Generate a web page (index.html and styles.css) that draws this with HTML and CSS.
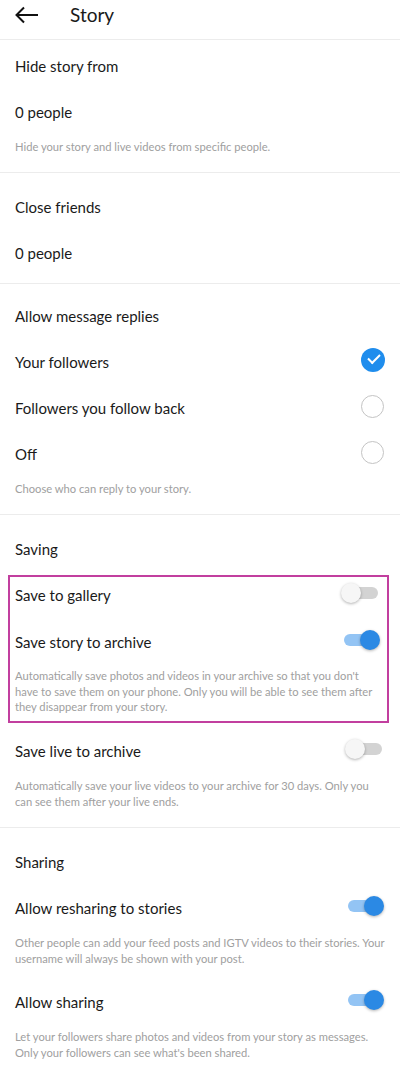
FILE: index.html
```html
<!DOCTYPE html>
<html lang="en">

<head>
    <meta charset="UTF-8">
    <meta name="viewport" content="width=device-width, initial-scale=1.0">
    <title>Story</title>
    <link rel="stylesheet" href="styles.css">
</head>

<body>
    <header class="topbar">
        <svg class="back" width="24" height="18" viewBox="0 0 24 18">
            <path d="M23 9H2M9 1.5L1.5 9L9 16.5" fill="none" stroke="#111" stroke-width="2" />
        </svg>
        <h1 class="title">Story</h1>
    </header>

    <section class="section first">
        <div class="row">Hide story from</div>
        <div class="row">0 people</div>
        <p class="desc">Hide your story and live videos from specific people.</p>
    </section>

    <section class="section padded">
        <div class="row">Close friends</div>
        <div class="row">0 people</div>
    </section>

    <section class="section replies">
        <div class="row">Allow message replies</div>
        <div class="row">Your followers <span class="radio checked"></span></div>
        <div class="row">Followers you follow back <span class="radio"></span></div>
        <div class="row">Off <span class="radio"></span></div>
        <p class="desc">Choose who can reply to your story.</p>
    </section>

    <section class="section padded-top">
        <div class="row">Saving</div>
        <div class="highlight">
            <div class="row short">Save to gallery <span class="toggle"></span></div>
            <div class="row">Save story to archive <span class="toggle on"></span></div>
            <p class="desc">Automatically save photos and videos in your archive so that you don't have to save them on your phone. Only you will be able to see them after they disappear from your story.</p>
        </div>
        <div class="row live">Save live to archive <span class="toggle"></span></div>
        <p class="desc">Automatically save your live videos to your archive for 30 days. Only you can see them after your live ends.</p>
    </section>

    <section class="section padded-top last">
        <div class="row">Sharing</div>
        <div class="row">Allow resharing to stories <span class="toggle on"></span></div>
        <p class="desc tight">Other people can add your feed posts and IGTV videos to their stories. Your username will always be shown with your post.</p>
        <div class="row">Allow sharing <span class="toggle on"></span></div>
        <p class="desc">Let your followers share photos and videos from your story as messages. Only your followers can see what's been shared.</p>
    </section>
</body>

</html>
```

FILE: styles.css
```css
body {
    margin: 0;
    padding: 0;
    width: 400px;
    height: 1084px;
    overflow: hidden;
    background: #fff;
    color: #1a1a1a;
    font-family: "Lato", "Noto Sans", sans-serif;
}

.topbar {
    height: 40px;
    display: flex;
    align-items: center;
    padding: 0 15px 10px;
    border-bottom: 1px solid #ececec;
    box-sizing: border-box;
}

.back {
    display: block;
}

.title {
    margin: 0 0 0 31px;
    font-size: 19px;
    font-weight: 400;
}

.section {
    border-bottom: 1px solid #ececec;
}

.section.first {
    padding-top: 1px;
}

.section.padded {
    padding: 9px 0;
}

.section.replies {
    padding-top: 7px;
}

.section.padded-top {
    padding-top: 9px;
}

.section.last {
    border-bottom: none;
}

.row {
    height: 46px;
    box-sizing: border-box;
    display: flex;
    align-items: center;
    justify-content: space-between;
    padding: 3px 15px 0;
    font-size: 15px;
}

.desc {
    margin: 0;
    padding: 6px 15px 17px;
    font-size: 11.2px;
    line-height: 16px;
    color: #a0a0a0;
}

.desc.tight {
    padding-bottom: 10px;
}

.highlight {
    margin: 5px 11px 0 8px;
    border: 2px solid #c23f9f;
}

.highlight .row {
    padding: 3px 6px 0 5px;
}

.highlight .row.short {
    height: 32px;
    margin-bottom: 8px;
}

.highlight .desc {
    padding: 5px 5px 6px;
    line-height: 15.7px;
}

.row.live {
    margin-top: 3px;
}

.radio {
    width: 21px;
    height: 21px;
    border: 1.5px solid #c4c4c4;
    border-radius: 50%;
    margin: -3px 1px 0 0;
    position: relative;
}

.radio.checked {
    width: 24px;
    height: 24px;
    border: none;
    margin-right: 0;
    background: #1f8ded;
}

.radio.checked::after {
    content: "";
    position: absolute;
    left: 7px;
    top: 6px;
    width: 10px;
    height: 5px;
    border-left: 2px solid #fff;
    border-bottom: 2px solid #fff;
    transform: rotate(-45deg);
}

.toggle {
    width: 35px;
    height: 12px;
    border-radius: 6px;
    background: #d3d3d3;
    position: relative;
    margin: -3px 3px 0 0;
}

.toggle::after {
    content: "";
    position: absolute;
    left: -2px;
    top: -4px;
    width: 20px;
    height: 20px;
    border-radius: 50%;
    background: #f6f6f6;
    box-shadow: 0 1px 3px rgba(0, 0, 0, 0.3);
}

.toggle.on {
    background: #93c4f4;
    margin-right: 2px;
}

.toggle.on::after {
    left: auto;
    right: -1px;
    background: #2b89e4;
}
```
